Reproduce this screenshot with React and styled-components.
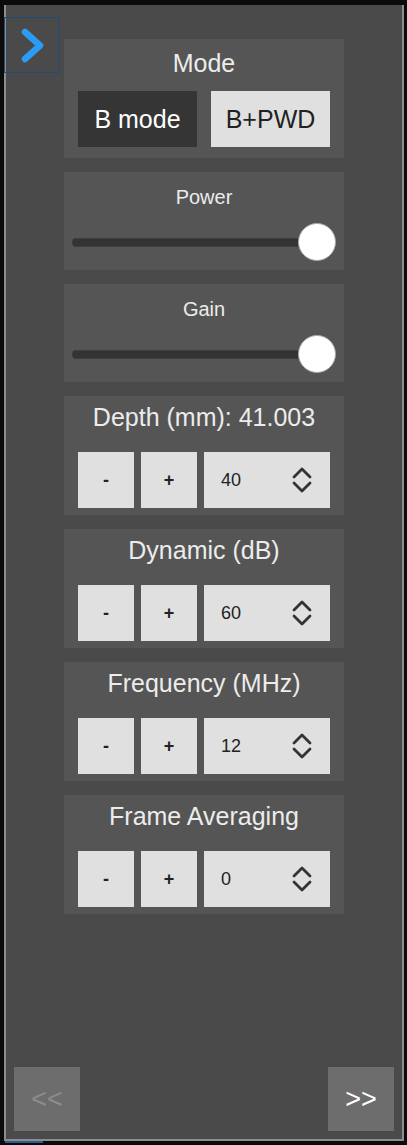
import styled, { createGlobalStyle } from "styled-components";

const GlobalStyle = createGlobalStyle`
  html, body {
    margin: 0;
    padding: 0;
    background: #0b0b0b;
    font-family: "Liberation Sans", Arial, sans-serif;
  }
`;

const Page = styled.div`
  padding: 5px 0 0 4px;
  width: 407px;
  height: 1145px;
  box-sizing: border-box;
  overflow: hidden;
`;

const Panel = styled.div`
  position: relative;
  width: 400px;
  height: 1136px;
  box-sizing: border-box;
  background: #4a4a4a;
  border: 2px solid #8c8c8c;
  border-top: none;
  display: flex;
  flex-direction: column;
  padding: 34px 8px 8px;
`;

const ToggleButton = styled.button`
  position: absolute;
  top: 12px;
  left: -2px;
  width: 56px;
  height: 56px;
  box-sizing: border-box;
  border: 1px solid #1f4c78;
  background: transparent;
  padding: 0;
  display: flex;
  align-items: center;
  justify-content: center;
`;

const Controls = styled.div`
  width: 280px;
  align-self: center;
  display: flex;
  flex-direction: column;
  gap: 14px;
`;

const Section = styled.div`
  background: #555555;
  display: flex;
  flex-direction: column;
  align-items: stretch;
  padding: ${(p) => p.$pad};
`;

const Title = styled.div`
  color: #ececec;
  text-align: center;
  font-size: ${(p) => (p.$small ? "20px" : "25px")};
  line-height: ${(p) => (p.$small ? "22px" : "28px")};
`;

const ModeRow = styled.div`
  display: flex;
  gap: 14px;
  padding: 0 14px;
  margin-top: 14px;
`;

const ModeButton = styled.button`
  flex: 1;
  height: 56px;
  border: none;
  font-family: inherit;
  font-size: 25px;
  padding: 0;
  background: ${(p) => (p.$active ? "#353535" : "#e0e0e0")};
  color: ${(p) => (p.$active ? "#ffffff" : "#222222")};
`;

const SliderTrack = styled.div`
  position: relative;
  margin: 15px 8px 0;
  height: 38px;
  display: flex;
  align-items: center;

  &::before {
    content: "";
    flex: 1;
    height: 9px;
    border-radius: 5px;
    background: #333333;
    box-shadow: inset 0 0 0 1px #3e3e3e;
  }
`;

const Thumb = styled.div`
  position: absolute;
  top: 0;
  width: 38px;
  height: 38px;
  box-sizing: border-box;
  border-radius: 50%;
  background: #ffffff;
  border: 1px solid #a8a8a8;
  transform: translateX(-100%);
`;

const StepRow = styled.div`
  display: flex;
  gap: 7px;
  padding: 0 14px;
  margin-top: 21px;
`;

const StepButton = styled.button`
  width: 56px;
  height: 56px;
  border: none;
  background: #e0e0e0;
  color: #222222;
  font-family: inherit;
  font-weight: bold;
  font-size: 18px;
  padding: 0;
`;

const NumberBox = styled.div`
  flex: 1;
  height: 56px;
  background: #e0e0e0;
  display: flex;
  align-items: center;
  justify-content: space-between;
  padding: 0 18px 0 17px;
  box-sizing: border-box;
  color: #222222;
  font-size: 18px;
`;

const NavRow = styled.div`
  margin-top: auto;
  display: flex;
  justify-content: space-between;
`;

const NavButton = styled.button`
  width: 66px;
  height: 64px;
  border: none;
  background: #6d6d6d;
  font-family: inherit;
  font-size: 27px;
  padding: 0;
  color: ${(p) => (p.disabled ? "#8c8c8c" : "#ffffff")};
`;

const Underline = styled.div`
  width: 38px;
  height: 2px;
  margin-left: 1px;
  background: #2c5d8f;
`;

function Slider({ value }) {
  return (
    <SliderTrack>
      <Thumb style={{ left: `${value}%` }} />
    </SliderTrack>
  );
}

function Spinner() {
  return (
    <svg width="20" height="28" viewBox="0 0 20 28" fill="none">
      <path
        d="M2 11 L10 3 L18 11"
        stroke="#333"
        strokeWidth="2.8"
        strokeLinecap="round"
        strokeLinejoin="round"
      />
      <path
        d="M2 17 L10 25 L18 17"
        stroke="#333"
        strokeWidth="2.8"
        strokeLinecap="round"
        strokeLinejoin="round"
      />
    </svg>
  );
}

const steppers = [
  { label: "Depth (mm): 41.003", value: 40 },
  { label: "Dynamic (dB)", value: 60 },
  { label: "Frequency (MHz)", value: 12 },
  { label: "Frame Averaging", value: 0 },
];

function App() {
  return (
    <>
      <GlobalStyle />
      <Page>
        <Panel>
          <ToggleButton>
            <svg width="54" height="54" viewBox="0 0 54 54">
              <path
                d="M20 14 L35 27.5 L20 41"
                fill="none"
                stroke="#2b9bf4"
                strokeWidth="6.5"
                strokeLinecap="round"
                strokeLinejoin="round"
              />
            </svg>
          </ToggleButton>
          <Controls>
            <Section $pad="10px 0 11px">
              <Title>Mode</Title>
              <ModeRow>
                <ModeButton $active>B mode</ModeButton>
                <ModeButton>B+PWD</ModeButton>
              </ModeRow>
            </Section>
            <Section $pad="14px 0 9px">
              <Title $small>Power</Title>
              <Slider value={100} />
            </Section>
            <Section $pad="14px 0 9px">
              <Title $small>Gain</Title>
              <Slider value={100} />
            </Section>
            {steppers.map((s) => (
              <Section key={s.label} $pad="7px 0 7px">
                <Title>{s.label}</Title>
                <StepRow>
                  <StepButton>-</StepButton>
                  <StepButton>+</StepButton>
                  <NumberBox>
                    <span>{s.value}</span>
                    <Spinner />
                  </NumberBox>
                </StepRow>
              </Section>
            ))}
          </Controls>
          <NavRow>
            <NavButton disabled>&lt;&lt;</NavButton>
            <NavButton>&gt;&gt;</NavButton>
          </NavRow>
        </Panel>
        <Underline />
      </Page>
    </>
  );
}

export default App;
